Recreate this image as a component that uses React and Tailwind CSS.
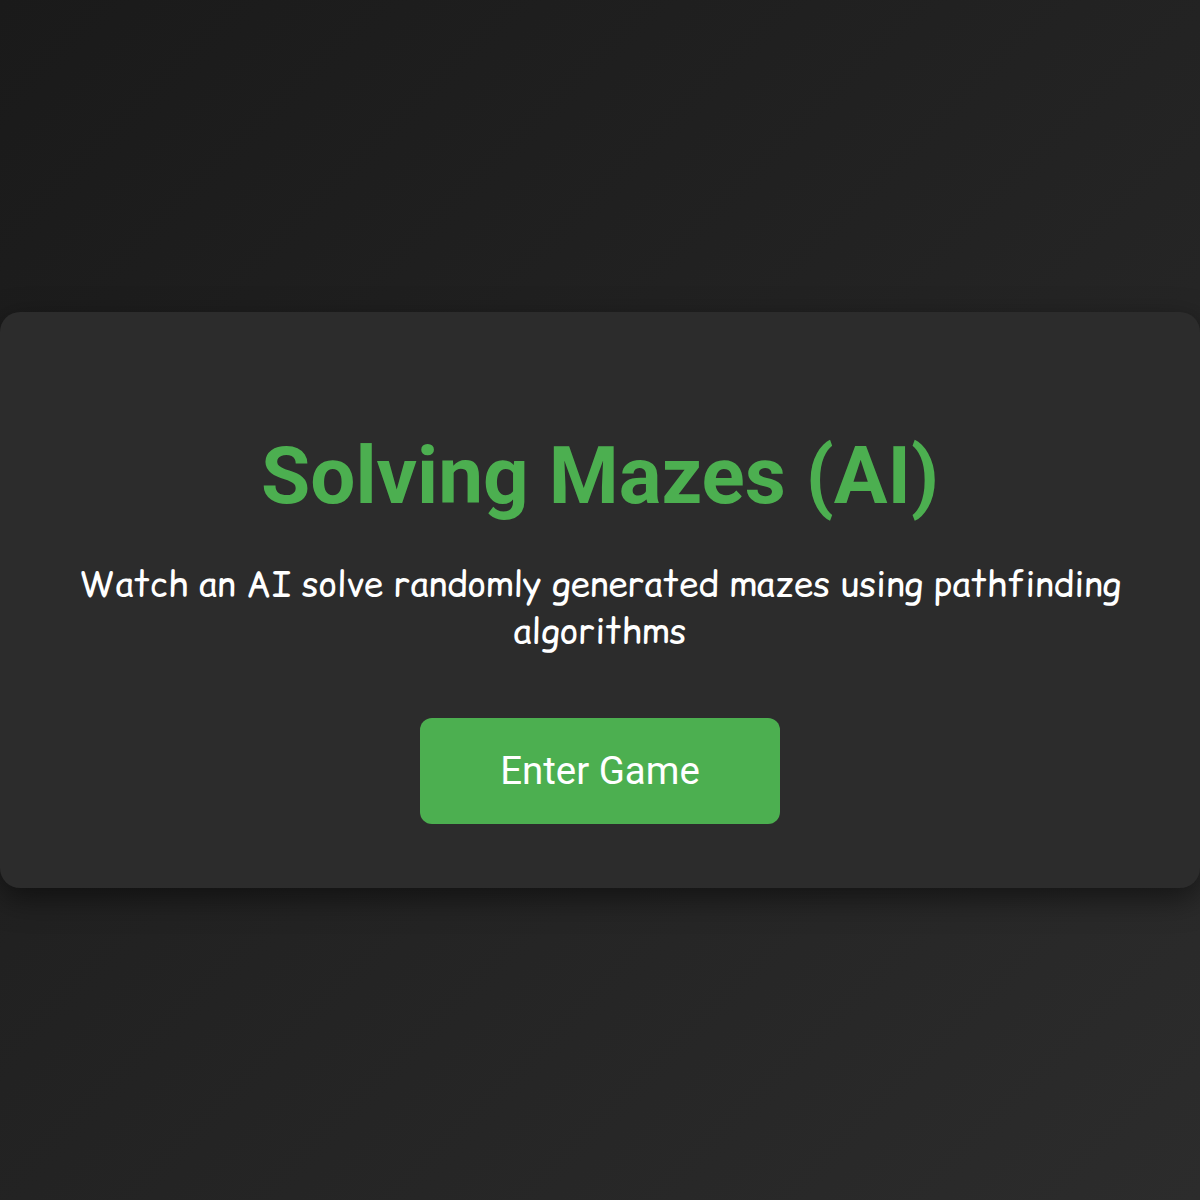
export default function App() {
  return (
    <div className="min-h-screen w-full flex items-center justify-center bg-gradient-to-br from-[#1a1a1a] to-[#2c2c2c]">
      <div className="w-full h-[576px] rounded-[20px] bg-[#2c2c2c] shadow-[0_10px_30px_rgba(0,0,0,0.5)] px-10 pt-[116px] flex flex-col items-center text-center">
        <h1 className="text-[80px] leading-[96px] font-bold text-[#4caf50] font-['Roboto',sans-serif]">
          Solving Mazes (AI)
        </h1>
        <p className="mt-[36px] text-[35.2px] leading-[47px] text-white font-['Comic_Relief','Comic_Neue',cursive]">
          Watch an AI solve randomly generated mazes using pathfinding algorithms
        </p>
        <button className="mt-[64px] w-[360px] h-[106px] rounded-xl bg-[#4caf50] text-white text-[38.4px] font-['Roboto',sans-serif]">
          Enter Game
        </button>
      </div>
    </div>
  );
}
